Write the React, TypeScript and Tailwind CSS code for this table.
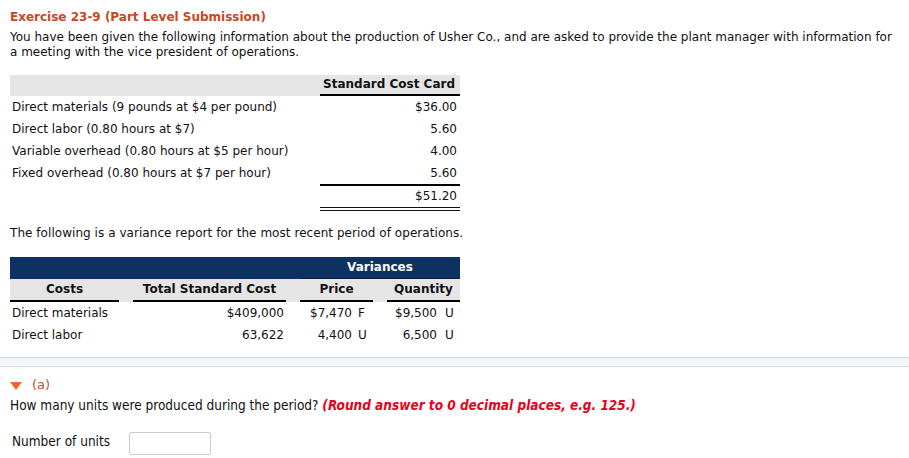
import React from 'react'

const verdana = { fontFamily: '"DejaVu Sans", Verdana, sans-serif' }
const condensed = { fontFamily: '"DejaVu Sans Condensed", "Liberation Sans Narrow", "DejaVu Sans", sans-serif' }

const costRows = [
  ['Direct materials (9 pounds at $4 per pound)', '$36.00'],
  ['Direct labor (0.80 hours at $7)', '5.60'],
  ['Variable overhead (0.80 hours at $5 per hour)', '4.00'],
  ['Fixed overhead (0.80 hours at $7 per hour)', '5.60'],
]

const varianceRows = [
  { name: 'Direct materials', total: '$409,000', price: '$7,470', pf: 'F', qty: '$9,500', qf: 'U' },
  { name: 'Direct labor', total: '63,622', price: '4,400', pf: 'U', qty: '6,500', qf: 'U' },
]

function StandardCostCard() {
  return (
    <div className="w-[450px] text-[12px] text-[#111]">
      <div className="flex h-[21px] bg-[#e5e5e5]">
        <div className="flex-1" />
        <div className="w-[140px] border-b-2 border-black text-right font-bold leading-[19px] pr-[5px]">
          Standard Cost Card
        </div>
      </div>
      {costRows.map(([label, value]) => (
        <div key={label} className="flex h-[22px] items-center">
          <div className="flex-1 pl-[2px]">{label}</div>
          <div className="w-[140px] text-right pr-[3px]">{value}</div>
        </div>
      ))}
      <div className="flex">
        <div className="flex-1" />
        <div className="w-[140px] h-[27px] border-t-2 border-black border-b-4 border-b-[#111] border-double text-right pr-[3px] leading-[20px]">
          $51.20
        </div>
      </div>
    </div>
  )
}

function VarianceReport() {
  return (
    <div className="w-[450px] text-[12px] text-[#111]">
      <div className="flex h-[22px] bg-[#0d3262]">
        <div className="flex-1" />
        <div className="w-[160px] border-b border-[#0a2246] text-center font-bold text-white leading-[20px]">
          Variances
        </div>
      </div>
      <div className="grid grid-cols-[109px_153px_73px_73px] gap-x-[14px] bg-[#e5e5e5] h-[23px]">
        <div className="border-b-2 border-black text-center font-bold leading-[21px]">Costs</div>
        <div className="border-b-2 border-black text-center font-bold leading-[21px]">Total Standard Cost</div>
        <div className="border-b-2 border-black text-center font-bold leading-[21px]">Price</div>
        <div className="border-b-2 border-black text-center font-bold leading-[21px]">Quantity</div>
      </div>
      {varianceRows.map((r) => (
        <div key={r.name} className="grid grid-cols-[109px_153px_73px_73px] gap-x-[14px] h-[22px] items-center">
          <div className="pl-[2px]">{r.name}</div>
          <div className="text-right pr-[2px]">{r.total}</div>
          <div className="flex">
            <span className="w-[52px] text-right">{r.price}</span>
            <span className="pl-[6px]">{r.pf}</span>
          </div>
          <div className="flex">
            <span className="w-[50px] text-right">{r.qty}</span>
            <span className="pl-[8px]">{r.qf}</span>
          </div>
        </div>
      ))}
    </div>
  )
}

export default function App() {
  return (
    <div className="w-[909px] h-[458px] bg-white overflow-hidden" style={verdana}>
      <div className="px-[10px] pt-[9px]">
        <h1 className="text-[12px] font-bold leading-[17px] text-[#c9471c]">
          Exercise 23-9 (Part Level Submission)
        </h1>
        <p className="mt-[4px] text-[12px] leading-[15px] text-[#111]">
          You have been given the following information about the production of Usher Co., and are asked to provide the plant manager with information for a meeting with the vice president of operations.
        </p>
        <div className="mt-[15px]">
          <StandardCostCard />
        </div>
        <p className="mt-[15px] text-[12px] leading-[15px] tracking-[0.05px] text-[#111]">
          The following is a variance report for the most recent period of operations.
        </p>
        <div className="mt-[16px]">
          <VarianceReport />
        </div>
      </div>

      <div className="mt-[11px] h-[10px] border-y border-[#d3dbe4] bg-[#f4f7fa]" />

      <div className="px-[10px] pt-[9px]">
        <div className="flex items-center gap-[10px] h-[18px]">
          <svg width="12" height="8" viewBox="0 0 12 8" className="mt-[1px]">
            <polygon points="0,0 12,0 6,8" fill="#f26522" />
          </svg>
          <span className="text-[13px] font-medium text-[#c84d22]">(a)</span>
        </div>
        <p className="mt-[3px] text-[13.5px] leading-[16px] text-[#111]" style={condensed}>
          How many units were produced during the period?{' '}
          <span className="font-bold italic text-[#e8001b]">(Round answer to 0 decimal places, e.g. 125.)</span>
        </p>
        <div className="mt-[19px] flex items-start" style={condensed}>
          <span className="w-[119px] pl-[2px] pt-[1px] text-[13.5px] leading-[16px] text-[#111]">Number of units</span>
          <input className="w-[82px] h-[23px] border border-[#cccccc] rounded-[2px] bg-white outline-none" />
        </div>
      </div>
    </div>
  )
}
